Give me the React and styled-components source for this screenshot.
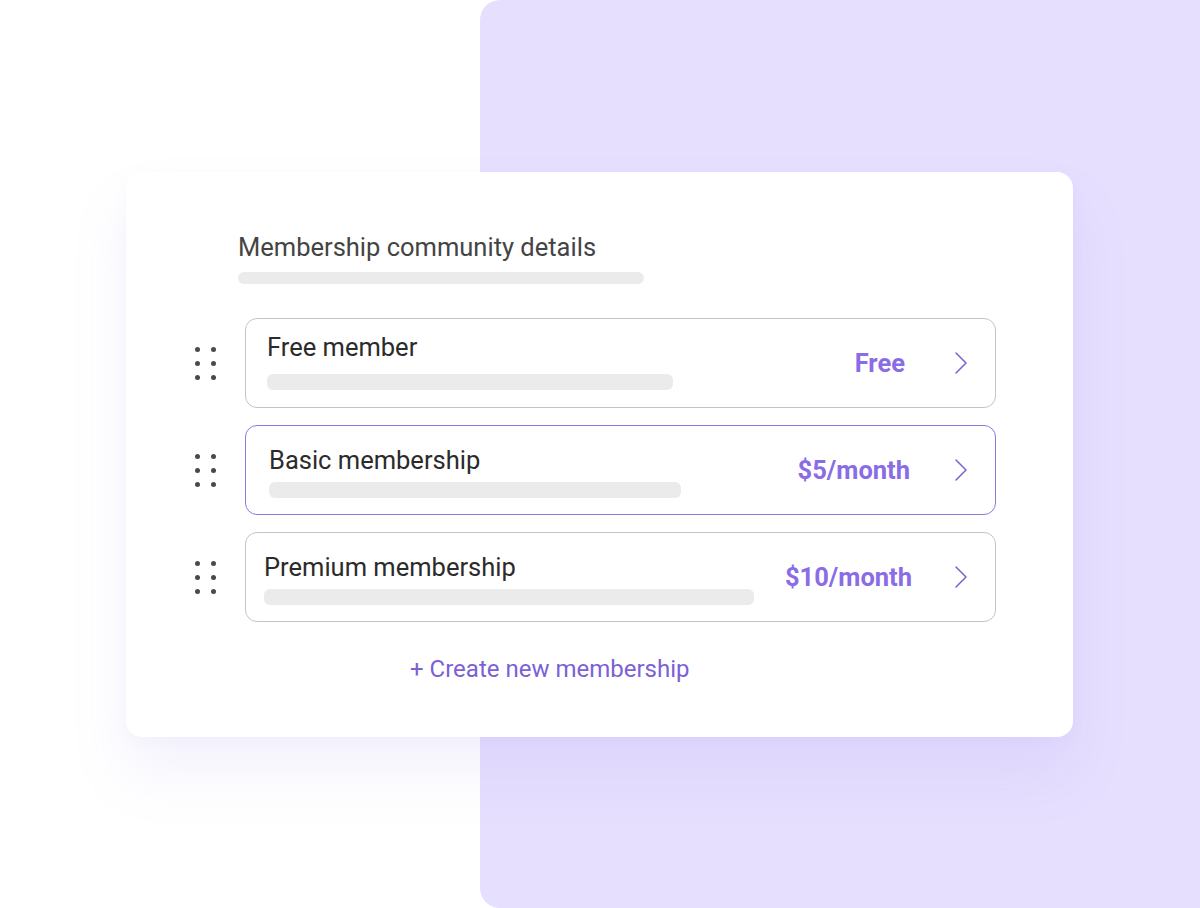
import React from "react";
import styled, { createGlobalStyle } from "styled-components";

const Global = createGlobalStyle`
  html, body {
    margin: 0;
    padding: 0;
    background: #ffffff;
    font-family: Roboto, "Liberation Sans", sans-serif;
  }
`;

const Stage = styled.div`
  position: relative;
  width: 1200px;
  height: 908px;
  overflow: hidden;
  background: #ffffff;
`;

// decorative panel lying behind the card
const Backdrop = styled.div`
  position: absolute;
  left: 480px;
  top: 0;
  width: 740px;
  height: 908px;
  background: #e6dffe;
  border-radius: 20px;
`;

const Card = styled.div`
  position: relative;
  margin: 172px 0 0 126px;
  width: 947px;
  height: 565px;
  box-sizing: border-box;
  padding: 60px 77px 0 67px;
  background: #ffffff;
  border-radius: 16px;
  box-shadow: 0 36px 60px rgba(150, 130, 235, 0.1),
    0 4px 14px rgba(150, 130, 235, 0.05);
`;

const Header = styled.div`
  padding-left: 45px;
  display: flex;
  flex-direction: column;
  gap: 10px;
`;

const Title = styled.div`
  font-size: 25.5px;
  line-height: 30px;
  color: #444444;
`;

const Bar = styled.div`
  width: ${(p) => p.w}px;
  height: ${(p) => p.h || 16}px;
  border-radius: 6px;
  background: #ebebeb;
`;

const List = styled.div`
  margin-top: 34px;
  display: flex;
  flex-direction: column;
  gap: 17px;
`;

const Item = styled.div`
  display: flex;
  align-items: center;
`;

const Handle = styled.div`
  width: 52px;
  box-sizing: border-box;
  flex-shrink: 0;
  display: grid;
  grid-template-columns: 5px 5px;
  grid-auto-rows: 5px;
  column-gap: 11px;
  row-gap: 9px;
  padding-left: 2px;
  span {
    width: 5px;
    height: 5px;
    border-radius: 50%;
    background: #4a4a4a;
  }
`;

const Row = styled.div`
  flex: 1;
  height: 90px;
  box-sizing: border-box;
  border: 1px solid ${(p) => (p.active ? "#8b79e0" : "#c4c4c4")};
  border-radius: 12px;
  display: flex;
  align-items: center;
  padding: 0 27px 0 ${(p) => p.pl}px;
`;

const Info = styled.div`
  flex: 1;
  align-self: flex-start;
  padding-top: ${(p) => p.pt}px;
  display: flex;
  flex-direction: column;
  gap: ${(p) => p.gap}px;
`;

const Name = styled.div`
  font-size: 25.5px;
  line-height: 30px;
  color: #2b2b2b;
`;

const Price = styled.div`
  font-size: 25.5px;
  font-weight: 700;
  color: #8a6ce6;
  margin-right: ${(p) => p.mr}px;
`;

const Chevron = styled.svg`
  width: 14px;
  height: 24px;
  flex-shrink: 0;
`;

const Create = styled.div`
  margin-top: 32px;
  padding-left: 217px;
  font-size: 24px;
  line-height: 30px;
  color: #7b61d6;
`;

const plans = [
  { name: "Free member", price: "Free", bar: 406, pl: 21, pt: 13, gap: 12, mr: 49 },
  { name: "Basic membership", price: "$5/month", bar: 412, pl: 23, pt: 19, gap: 7, mr: 44 },
  { name: "Premium membership", price: "$10/month", bar: 490, pl: 18, pt: 19, gap: 7, mr: 42 },
];

const Dots = () => (
  <Handle>
    {Array.from({ length: 6 }).map((_, i) => (
      <span key={i} />
    ))}
  </Handle>
);

export default function App() {
  return (
    <>
      <Global />
      <Stage>
        <Backdrop />
        <Card>
          <Header>
            <Title>Membership community details</Title>
            <Bar w={406} h={12} />
          </Header>
          <List>
            {plans.map((p, i) => (
              <Item key={p.name}>
                <Dots />
                <Row active={i === 1} pl={p.pl}>
                  <Info pt={p.pt} gap={p.gap}>
                    <Name>{p.name}</Name>
                    <Bar w={p.bar} />
                  </Info>
                  <Price mr={p.mr}>{p.price}</Price>
                  <Chevron viewBox="0 0 14 24" fill="none">
                    <polyline
                      points="2,2 12,12 2,22"
                      stroke="#7b61d6"
                      strokeWidth="1.5"
                      strokeLinecap="round"
                      strokeLinejoin="round"
                    />
                  </Chevron>
                </Row>
              </Item>
            ))}
          </List>
          <Create>+ Create new membership</Create>
        </Card>
      </Stage>
    </>
  );
}
